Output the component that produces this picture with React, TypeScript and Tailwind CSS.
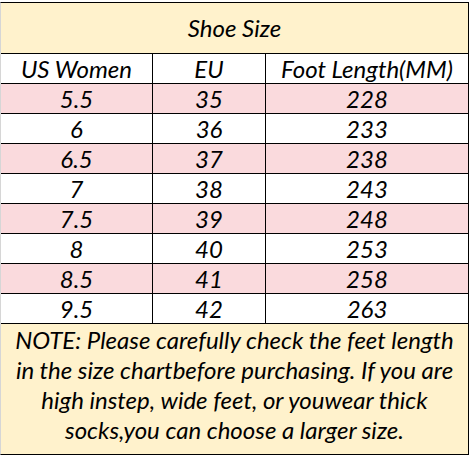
import React from "react";

const rows: [string, string, string][] = [
  ["5.5", "35", "228"],
  ["6", "36", "233"],
  ["6.5", "37", "238"],
  ["7", "38", "243"],
  ["7.5", "39", "248"],
  ["8", "40", "253"],
  ["8.5", "41", "258"],
  ["9.5", "42", "263"],
];

export default function App() {
  return (
    <div className="w-[471px] h-[457px] bg-white pt-[2px] overflow-hidden" style={{ fontFamily: "Lato, 'Open Sans', sans-serif" }}>
      <div className="w-[469px] border-l border-l-[#d6d6d6] border-t border-b border-r border-t-black border-b-black border-r-black italic text-black text-[24px] leading-[30px]">
        <div className="h-[51px] bg-[#fff2cc] border-b border-black flex items-center justify-center">
          Shoe Size
        </div>
        <div className="h-[30px] bg-white border-b border-black flex">
          <div className="w-[152px] border-r border-black flex items-center justify-center">US Women</div>
          <div className="w-[113px] border-r border-black flex items-center justify-center">EU</div>
          <div className="flex-1 flex items-center justify-center">Foot Length(MM)</div>
        </div>
        {rows.map((r, i) => (
          <div key={i} className={`h-[30px] border-b border-black flex ${i % 2 === 0 ? "bg-[#fadadd]" : "bg-white"}`}>
            <div className="w-[152px] border-r border-black flex items-center justify-center">{r[0]}</div>
            <div className="w-[113px] border-r border-black flex items-center justify-center">{r[1]}</div>
            <div className="flex-1 flex items-center justify-center">{r[2]}</div>
          </div>
        ))}
        <div className="h-[130px] bg-[#fff2cc] flex flex-col items-center justify-start pt-[1px] leading-[30px] whitespace-nowrap">
          <div>NOTE: Please carefully check the feet length</div>
          <div>in the size chartbefore purchasing. If you are</div>
          <div>high instep, wide feet, or youwear thick</div>
          <div>socks,you can choose a larger size.</div>
        </div>
      </div>
    </div>
  );
}
